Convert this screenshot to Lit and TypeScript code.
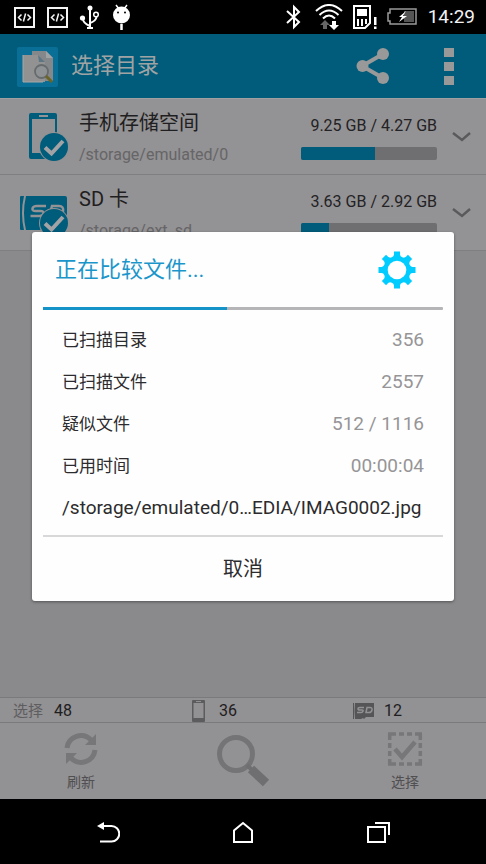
import { LitElement, html, css, svg } from "lit";
import { customElement, property } from "lit/decorators.js";
import { styleMap } from "lit/directives/style-map.js";

const checkBadge = svg`
  <circle cx="34" cy="35" r="15" fill="#939294"></circle>
  <circle cx="34" cy="35" r="14" fill="#005c7b"></circle>
  <path d="M25 35.500l6.500 6 11.500-12.500" fill="none" stroke="#a3a2a4" stroke-width="4"></path>`;

const phoneIcon = html`<svg class="icon" width="50" height="50" viewBox="0 0 50 50" aria-hidden="true">
  <path fill="#005c7b" fill-rule="evenodd" d="M11 1h24q2 0 2 2v42q0 2-2 2H11q-2 0-2-2V3q0-2 2-2zM12 7v34h23V7zM19 3v2h9V3z"></path>
  ${checkBadge}
</svg>`;

const cardIcon = html`<svg class="icon" width="50" height="50" viewBox="0 0 50 50" aria-hidden="true">
  <path fill="#005c7b" d="M1 8h3q-4 17 0 34H1q-1 0-1-1V9q0-1 1-1z"></path>
  <path fill="#005c7b" d="M6 8h39q2 0 2 2v31H26l-3-2-3 3H6q-4-17 0-34z"></path>
  <path fill="none" stroke="#939294" stroke-width="2.500" d="M26 18h-9q-4 0-4.500 2.500t3 2.500h5q3.500 0 3 2.500t-4 2.500h-9M29 29l3-11h7q5 0 4 5.500t-6 5.500z"></path>
  ${checkBadge}
</svg>`;

interface Volume {
  name: string;
  path: string;
  usage: string;
  used: number;
  icon: unknown;
}

const volumes: Volume[] = [
  { name: "手机存储空间", path: "/storage/emulated/0", usage: "9.25 GB / 4.27 GB", used: 54, icon: phoneIcon },
  { name: "SD 卡", path: "/storage/ext_sd", usage: "3.63 GB / 2.92 GB", used: 20, icon: cardIcon },
];

const stats: [string, string][] = [
  ["已扫描目录", "356"],
  ["已扫描文件", "2557"],
  ["疑似文件", "512 / 1116"],
  ["已用时间", "00:00:04"],
];

const shared = css`
  * { box-sizing: border-box; }
  svg { display: block; flex: none; }
  button {
    margin: 0; padding: 0; border: 0; background: none;
    color: inherit; font: inherit; cursor: pointer;
  }
`;

@customElement("status-bar")
export class StatusBar extends LitElement {
  static styles = [shared, css`
    :host {
      display: flex; align-items: center; justify-content: space-between;
      height: 34px; padding: 0 11px 0 13px; background: #000; color: #f2f2f2;
    }
    .group { display: flex; align-items: center; }
    .notices { gap: 11px; }
    .system { gap: 9px; }
    .time { font-size: 19px; line-height: 24px; }
  `];

  render() {
    const code = html`<svg width="22" height="26" viewBox="0 0 22 26" fill="none" stroke="#f4f4f4" aria-hidden="true">
      <rect x="2" y="4" width="19" height="19" stroke-width="2"></rect>
      <path stroke-width="1.500" d="M8.500 10.500l-3 3 3 3M14.500 10.500l3 3-3 3M12.600 9.500l-2.200 8"></path>
    </svg>`;
    return html`
      <div class="group notices">
        ${code}${code}
        <svg width="22" height="26" viewBox="0 0 22 26" fill="none" stroke="#fff" stroke-width="2" aria-hidden="true">
          <path d="M11 3v21M8 24h6M4 15q0 4 7 7M11 19q6-2 6.500-6"></path>
          <circle cx="11" cy="4" r="2.500" fill="#fff" stroke="none"></circle>
          <circle cx="3.500" cy="14" r="2.600" fill="#fff" stroke="none"></circle>
          <circle cx="17" cy="10.500" r="2.300" stroke-width="1.500"></circle>
        </svg>
        <svg width="22" height="26" viewBox="0 0 22 26" aria-hidden="true">
          <path d="M4 1l3 4M15 1l-3 4" stroke="#fff" stroke-width="1.500"></path>
          <path d="M9.500 20v6" stroke="#fff" stroke-width="2.500"></path>
          <circle cx="9.500" cy="11" r="8.500" fill="#fff"></circle>
          <circle cx="6" cy="8.500" r="1" fill="#000"></circle>
          <circle cx="13" cy="8.500" r="1" fill="#000"></circle>
        </svg>
      </div>
      <div class="group system">
        <svg width="20" height="26" viewBox="0 0 20 26" fill="none" stroke="#fff" stroke-width="2" aria-hidden="true">
          <path d="M2 7l12 11-5 5V3l5 5L2 19"></path>
        </svg>
        <svg width="30" height="26" viewBox="0 0 30 26" fill="none" stroke="#fff" stroke-width="2" aria-hidden="true">
          <path d="M2 7q13-12 26 0M5.500 11q9.500-9 19 0M9 14.500q6-6 12 0"></path>
          <path d="M11 16l5 5h-3v4H9v-4H6z" fill="#666" stroke="none"></path>
          <path d="M20 26l-5-5h3v-4h4v4h3z" fill="#fff" stroke="none"></path>
        </svg>
        <svg width="25" height="26" viewBox="0 0 25 26" aria-hidden="true">
          <path d="M1 2h16v17l-5 5H1z" fill="none" stroke="#fff" stroke-width="2"></path>
          <path d="M4 5h10v7H4zM4 15h2v7H4zM8 15h2v7H8zM12 15h2v5h-2z" fill="#fff"></path>
          <path d="M21 13h2.500v8H21zM21 22.500h2.500V25H21z" fill="#fff"></path>
        </svg>
        <svg width="32" height="26" viewBox="0 0 32 26" aria-hidden="true">
          <path d="M3 5h26v15H3v-3H1V9h2z" fill="none" stroke="#999" stroke-width="1.500"></path>
          <path d="M17 7h10v11H17z" fill="#555"></path>
          <path d="M19 7l-7 6h3l-3 5 8-6h-4z" fill="#fff"></path>
        </svg>
        <time class="time">14:29</time>
      </div>`;
  }
}

@customElement("title-bar")
export class TitleBar extends LitElement {
  static styles = [shared, css`
    :host {
      display: flex; align-items: center; gap: 13px; height: 65px;
      padding: 0 32px 0 17px; background: #005c7a; color: #a0a3a4;
      border-bottom: 1px solid #a0a0a2;
    }
    .title { flex: 1; margin: 0; font-size: 22px; line-height: 32px; font-weight: 400; }
    .actions { display: flex; align-items: center; gap: 53px; }
  `];

  render() {
    return html`
      <svg width="41" height="41" viewBox="0 0 41 41" aria-hidden="true">
        <rect y="1" width="41" height="40" rx="2" fill="#0a6f96"></rect>
        <path d="M15 5h14l7 7v23H15z" fill="#85888a"></path>
        <path d="M29 5l7 7h-7z" fill="#a0a3a4"></path>
        <path d="M6 9h15l7 7v20H6z" fill="#929292"></path>
        <path d="M6 9v27h20" fill="none" stroke="#a8a8a8"></path>
        <path d="M21 9l7 7h-6z" fill="#5e7683"></path>
        <circle cx="24.500" cy="25.500" r="6.500" fill="#8f9294" stroke="#666b6e" stroke-width="1.800"></circle>
        <path d="M29 30l6 6" stroke="#6b6528" stroke-width="3"></path>
      </svg>
      <h1 class="title">选择目录</h1>
      <div class="actions">
        <button aria-label="分享">
          <svg width="34" height="38" viewBox="0 0 34 38" fill="#999" aria-hidden="true">
            <path d="M27 7L6 19l21 12" fill="none" stroke="#999" stroke-width="4"></path>
            <circle cx="6.500" cy="19" r="6"></circle>
            <circle cx="27" cy="7" r="6"></circle>
            <circle cx="27" cy="31" r="6"></circle>
          </svg>
        </button>
        <button aria-label="更多">
          <svg width="11" height="38" viewBox="0 0 11 38" aria-hidden="true">
            <path d="M1 1h10v9H1zM1 15h10v9H1zM1 29h10v9H1z" fill="#999"></path>
          </svg>
        </button>
      </div>`;
  }
}

@customElement("volume-row")
export class VolumeRow extends LitElement {
  @property({ attribute: false }) volume!: Volume;

  static styles = [shared, css`
    :host {
      display: flex; align-items: center; height: 76px; padding: 0 14px 0 20px;
      background: #939294; border-bottom: 1px solid #7f7e80;
    }
    .text { flex: 1; min-width: 0; margin-left: 9px; padding-top: 4px; }
    .name { font-size: 20px; line-height: 28px; color: #1f1e20; }
    .path { margin-top: 4px; font-size: 16px; line-height: 28px; color: #666567; }
    .space { width: 30%; }
    .usage { font-size: 16px; line-height: 24px; color: #232224; text-align: right; white-space: nowrap; }
    .track { margin-top: 9px; height: 13px; border-radius: 2px; background: #6f6e70; overflow: hidden; }
    .fill { height: 100%; background: #005c7a; }
    .open { margin-left: 13px; }
  `];

  render() {
    const v = this.volume;
    return html`
      ${v.icon}
      <div class="text">
        <div class="name">${v.name}</div>
        <div class="path">${v.path}</div>
      </div>
      <div class="space">
        <div class="usage">${v.usage}</div>
        <div class="track" role="meter" aria-label=${v.name} aria-valuenow=${v.used}>
          <div class="fill" style=${styleMap({ width: `${v.used}%` })}></div>
        </div>
      </div>
      <button class="open" aria-label="展开">
        <svg width="22" height="22" viewBox="0 0 22 22" aria-hidden="true">
          <path d="M3 7l9 7 8-7" fill="none" stroke="#5a595b" stroke-width="2.400"></path>
        </svg>
      </button>`;
  }
}

@customElement("compare-dialog")
export class CompareDialog extends LitElement {
  @property({ type: Number }) percent = 46;

  static styles = [shared, css`
    :host { display: block; width: 100%; max-width: 480px; }
    .dialog {
      padding: 0 11px; background: #fefefe; border-radius: 3px; color: #2c2b2d;
      box-shadow: 0 1px 3px rgba(0, 0, 0, 0.4);
    }
    .head { display: flex; align-items: center; justify-content: space-between; height: 75px; padding: 0 27px 0 12px; }
    .title { margin: 0; font-size: 22px; line-height: 32px; font-weight: 400; color: #1b96cb; }
    .track { height: 3px; border-radius: 1px; background: #b5b4b6; }
    .fill { height: 100%; background: #1493c9; }
    .body { padding: 9px 19px 6px; }
    .stats { margin: 0; }
    .stat { display: flex; align-items: center; justify-content: space-between; height: 42px; }
    .label { font-size: 17px; line-height: 26px; }
    .value { margin: 0; font-size: 19px; line-height: 26px; color: #969597; }
    .file { margin: 0; font-size: 19px; line-height: 42px; white-space: nowrap; }
    .cancel { display: block; width: 100%; height: 66px; padding-bottom: 4px; border-top: 2px solid #d8d7d9; font-size: 20px; }
  `];

  render() {
    return html`
      <section class="dialog" role="dialog" aria-labelledby="heading">
        <header class="head">
          <h2 class="title" id="heading">正在比较文件...</h2>
          <button aria-label="设置">
            <svg width="38" height="38" viewBox="-19 -19 38 38" aria-hidden="true">
              <circle r="15.500" fill="#0cf"></circle>
              ${[0, 45, 90, 135].map((a) => svg`<rect x="-3" y="-18.500" width="6" height="37" fill="#0cf" transform="rotate(${a})"></rect>`)}
              ${[0, 1, 2, 3, 4, 5, 6, 7].map((i) => svg`<circle cy="-17" r="3.300" fill="#fefefe" transform="rotate(${i * 45 + 22.5})"></circle>`)}
              <circle r="9.300" fill="#fefefe"></circle>
            </svg>
          </button>
        </header>
        <div class="track" role="progressbar" aria-labelledby="heading" aria-valuenow=${this.percent}>
          <div class="fill" style=${styleMap({ width: `${this.percent}%` })}></div>
        </div>
        <div class="body">
          <dl class="stats">
            ${stats.map(([label, value]) => html`
              <div class="stat"><dt class="label">${label}</dt><dd class="value">${value}</dd></div>`)}
          </dl>
          <p class="file">/storage/emulated/0…EDIA/IMAG0002.jpg</p>
        </div>
        <button class="cancel">取消</button>
      </section>`;
  }
}

@customElement("bottom-tools")
export class BottomTools extends LitElement {
  static styles = [shared, css`
    :host { display: block; background: #929193; }
    .counts {
      display: grid; grid-template-columns: repeat(3, 1fr); height: 26px;
      border-top: 1px solid #7a797b; border-bottom: 1px solid #7a797b; color: #1e1d1f;
    }
    .count { display: flex; align-items: center; font-size: 16px; line-height: 24px; padding: 1px 0 0 30px; }
    .count.total { padding-left: 13px; gap: 11px; }
    .count.phone { gap: 13px; }
    .count.card { padding-left: 29px; gap: 9px; }
    .caption { font-size: 15px; color: #5e5d5f; }
    .tools { display: grid; grid-template-columns: repeat(3, 1fr); height: 76px; }
    .tool {
      display: flex; flex-direction: column; align-items: center; justify-content: center;
      gap: 5px; font-size: 14px; line-height: 20px; color: #504f51;
    }
  `];

  render() {
    return html`
      <div class="counts">
        <div class="count total"><span class="caption">选择</span><span>48</span></div>
        <div class="count phone">
          <svg width="14" height="22" viewBox="0 0 14 22" aria-hidden="true">
            <path fill="#5c5b5d" fill-rule="evenodd" d="M1 0h11q1 0 1 1v20q0 1-1 1H1q-1 0-1-1V1q0-1 1-1zM1.500 3v15h10V3zM4 1v1h5V1z"></path>
          </svg>
          <span>36</span>
        </div>
        <div class="count card">
          <svg width="22" height="16" viewBox="0 0 22 16" aria-hidden="true">
            <path fill="#555456" d="M0 0h1v16H0zM2 0h19v14h-8l-2 2-1-1-2 1H2q-1-8 0-16z"></path>
            <path fill="none" stroke="#929193" stroke-width="1.500" d="M11 4.500H7q-2 0-2 1.300T7 7h2q1.500 0 1 1.300T8 9.500H4M13 9.500l1-5h3q2.500 0 2 2.500t-3 2.500z"></path>
          </svg>
          <span>12</span>
        </div>
      </div>
      <div class="tools">
        <button class="tool">
          <svg width="36" height="36" viewBox="0 0 36 36" aria-hidden="true">
            <path d="M4 17a14 14 0 0 1 24-8M32 19a14 14 0 0 1-24 8" fill="none" stroke="#777678" stroke-width="5"></path>
            <path d="M33 3v11H22zM3 33V22h11z" fill="#777678"></path>
          </svg>
          <span>刷新</span>
        </button>
        <button class="tool" aria-label="搜索">
          <svg width="54" height="54" viewBox="0 0 54 54" aria-hidden="true">
            <circle cx="20" cy="20" r="16.500" fill="none" stroke="#747375" stroke-width="5"></circle>
            <path d="M31 31l6 6" stroke="#6f6e70" stroke-width="4"></path>
            <path d="M35 35l15 14" stroke="#6f6e70" stroke-width="9"></path>
          </svg>
        </button>
        <button class="tool">
          <svg width="36" height="36" viewBox="0 0 36 36" fill="none" stroke="#777678" aria-hidden="true">
            <path stroke-width="3.500" d="M1 3h8M12 3h5M20 3h5M28 3h7M1 33h8M12 33h5M20 33h5M28 33h7M2.700 3v6M2.700 12v5M2.700 20v5M2.700 28v5M33.300 3v6M33.300 12v5M33.300 20v5M33.300 28v5"></path>
            <path stroke-width="4.500" d="M8 18l7 8 13-15"></path>
          </svg>
          <span>选择</span>
        </button>
      </div>`;
  }
}

@customElement("nav-keys")
export class NavKeys extends LitElement {
  static styles = [shared, css`
    :host {
      display: grid; grid-template-columns: repeat(3, 1fr); height: 65px;
      padding: 0 40px; background: #000;
    }
    .key { display: flex; align-items: center; justify-content: center; }
  `];

  render() {
    return html`
      <button class="key" aria-label="返回">
        <svg width="24" height="24" viewBox="0 0 24 24" aria-hidden="true">
          <path d="M6 6h9.500a7.700 7.700 0 0 1 0 15.500H4" fill="none" stroke="#fff" stroke-width="2"></path>
          <path d="M1 6l7-4v8z" fill="#fff"></path>
        </svg>
      </button>
      <button class="key" aria-label="主屏幕">
        <svg width="24" height="24" viewBox="0 0 24 24" aria-hidden="true">
          <path d="M3 22V10.500L12 3l9 7.500V22z" fill="none" stroke="#fff" stroke-width="2"></path>
        </svg>
      </button>
      <button class="key" aria-label="最近任务">
        <svg width="24" height="24" viewBox="0 0 24 24" fill="none" stroke="#fff" stroke-width="2" aria-hidden="true">
          <path d="M2 7h17v15H2z"></path>
          <path d="M9 3h14v12"></path>
        </svg>
      </button>`;
  }
}

@customElement("app-root")
export class AppRoot extends LitElement {
  static styles = [shared, css`
    :host {
      display: flex; flex-direction: column; min-height: 100vh; background: #8a898b;
      font-family: Roboto, "Noto Sans CJK SC", sans-serif;
    }
    .screen { position: relative; flex: 1; display: flex; flex-direction: column; }
    .list { flex: 1; }
    .overlay {
      position: absolute; inset: 0; display: flex; align-items: center;
      justify-content: center; padding: 0 32px;
    }
  `];

  render() {
    return html`
      <status-bar></status-bar>
      <main class="screen">
        <title-bar></title-bar>
        <div class="list">
          ${volumes.map((v) => html`<volume-row .volume=${v}></volume-row>`)}
        </div>
        <bottom-tools></bottom-tools>
        <div class="overlay"><compare-dialog></compare-dialog></div>
      </main>
      <nav-keys></nav-keys>`;
  }
}
